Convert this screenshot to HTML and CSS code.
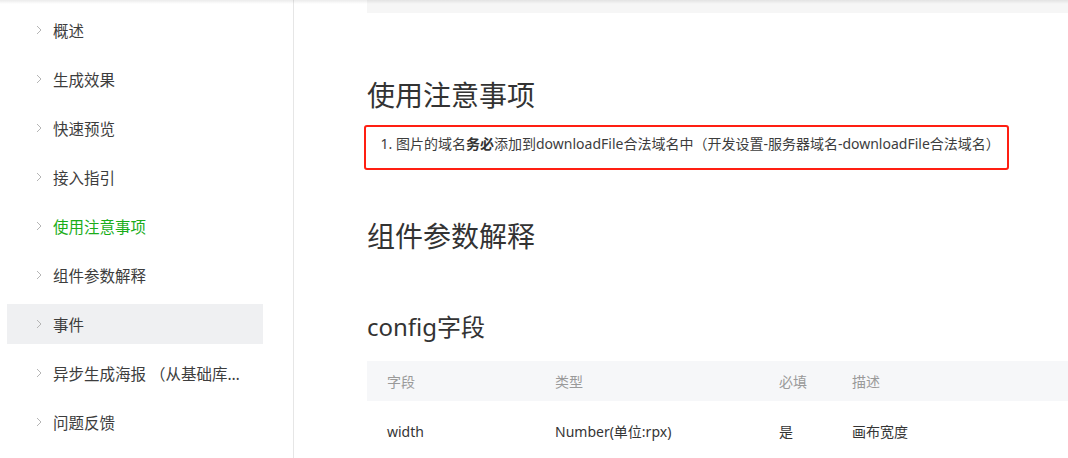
FILE: index.html
```html
<!DOCTYPE html>
<html lang="zh-CN">
<head>
    <meta charset="utf-8">
    <title>组件文档</title>
    <link rel="stylesheet" href="styles.css">
</head>
<body>
    <div id="page">
        <div id="sidebar">
            <ul class="nav">
                <li class="nav-item"><svg class="chevron" viewBox="0 0 6 10"><polyline points="1,1 5,5 1,9"/></svg><span>概述</span></li>
                <li class="nav-item"><svg class="chevron" viewBox="0 0 6 10"><polyline points="1,1 5,5 1,9"/></svg><span>生成效果</span></li>
                <li class="nav-item"><svg class="chevron" viewBox="0 0 6 10"><polyline points="1,1 5,5 1,9"/></svg><span>快速预览</span></li>
                <li class="nav-item"><svg class="chevron" viewBox="0 0 6 10"><polyline points="1,1 5,5 1,9"/></svg><span>接入指引</span></li>
                <li class="nav-item active"><svg class="chevron" viewBox="0 0 6 10"><polyline points="1,1 5,5 1,9"/></svg><span>使用注意事项</span></li>
                <li class="nav-item"><svg class="chevron" viewBox="0 0 6 10"><polyline points="1,1 5,5 1,9"/></svg><span>组件参数解释</span></li>
                <li class="nav-item hover"><svg class="chevron" viewBox="0 0 6 10"><polyline points="1,1 5,5 1,9"/></svg><span>事件</span></li>
                <li class="nav-item"><svg class="chevron" viewBox="0 0 6 10"><polyline points="1,1 5,5 1,9"/></svg><span class="clip">异步生成海报 （从基础库2.9.0开始支持）</span></li>
                <li class="nav-item"><svg class="chevron" viewBox="0 0 6 10"><polyline points="1,1 5,5 1,9"/></svg><span>问题反馈</span></li>
            </ul>
        </div>
        <div id="content">
            <div class="code-tail"></div>
            <h2 class="title">使用注意事项</h2>
            <div class="notice">
                <ol class="notes">
                    <li>图片的域名<b>务必</b>添加到downloadFile合法域名中（开发设置-服务器域名-downloadFile合法域名）</li>
                </ol>
            </div>
            <h2 class="title second">组件参数解释</h2>
            <h3 class="subtitle">config字段</h3>
            <div class="table">
                <div class="row head">
                    <div>字段</div>
                    <div>类型</div>
                    <div>必填</div>
                    <div>描述</div>
                </div>
                <div class="row">
                    <div>width</div>
                    <div>Number(单位:rpx)</div>
                    <div>是</div>
                    <div>画布宽度</div>
                </div>
            </div>
        </div>
    </div>
</body>
</html>
```

FILE: styles.css
```css
body {
    margin: 0;
    padding: 0;
    background-color: #fff;
    color: #353535;
    font-family: "Noto Sans", "Noto Sans CJK SC", sans-serif;
    overflow: hidden;
}

#page {
    position: relative;
    display: flex;
    height: 458px;
}

/* shadow of the header bar above */
#page::before {
    content: "";
    position: absolute;
    left: 0;
    right: 0;
    top: 0;
    height: 4px;
    background: linear-gradient(rgba(0, 0, 0, 0.08), rgba(0, 0, 0, 0));
    z-index: 2;
}

#sidebar {
    width: 293px;
    flex-shrink: 0;
    border-right: 1px solid #e6e6e6;
}

.nav {
    list-style: none;
    margin: 10px 0 0 7px;
    padding: 0;
    width: 256px;
}

.nav-item {
    display: flex;
    align-items: center;
    height: 40px;
    margin-bottom: 9px;
    padding-left: 29px;
    font-size: 15.5px;
    color: #3d3d3d;
    white-space: nowrap;
}

.nav-item span {
    overflow: hidden;
    text-overflow: ellipsis;
    padding-right: 14px;
}

.nav-item .clip {
    padding-right: 22px;
}

.nav-item.active {
    color: #1aad19;
}

.nav-item.hover {
    background-color: #eff0f2;
}

.chevron {
    width: 6px;
    height: 10px;
    margin-right: 11px;
    flex-shrink: 0;
    fill: none;
    stroke: #b5b5b5;
    stroke-width: 1;
}

#content {
    flex: 1;
    padding-left: 73px;
}

.code-tail {
    height: 13px;
    background-color: #f6f6f6;
}

.title {
    margin: 62px 0 0;
    font-size: 28px;
    font-weight: normal;
    line-height: 40px;
    color: #333;
}

.title.second {
    margin-top: 46px;
}

.notice {
    margin: 10px 59px 0 -3px;
    height: 41px;
    border: 2px solid #ff1f12;
    border-radius: 3px;
}

.notes {
    margin: 0;
    padding: 6px 0 0 30px;
    font-size: 14px;
    line-height: 22px;
    color: #3d3d3d;
}

.notes b {
    font-weight: bold;
    color: #333;
}

.subtitle {
    margin: 54px 0 0;
    font-size: 24px;
    font-weight: normal;
    line-height: 34px;
    color: #333;
}

.table {
    margin-top: 17px;
    font-size: 14px;
}

.row {
    display: grid;
    grid-template-columns: 168px 224px 73px 1fr;
    height: 60px;
    align-items: center;
    padding-left: 20px;
    color: #353535;
}

.row.head {
    height: 40px;
    background-color: #f6f7f9;
    color: #9a9a9a;
}
```
